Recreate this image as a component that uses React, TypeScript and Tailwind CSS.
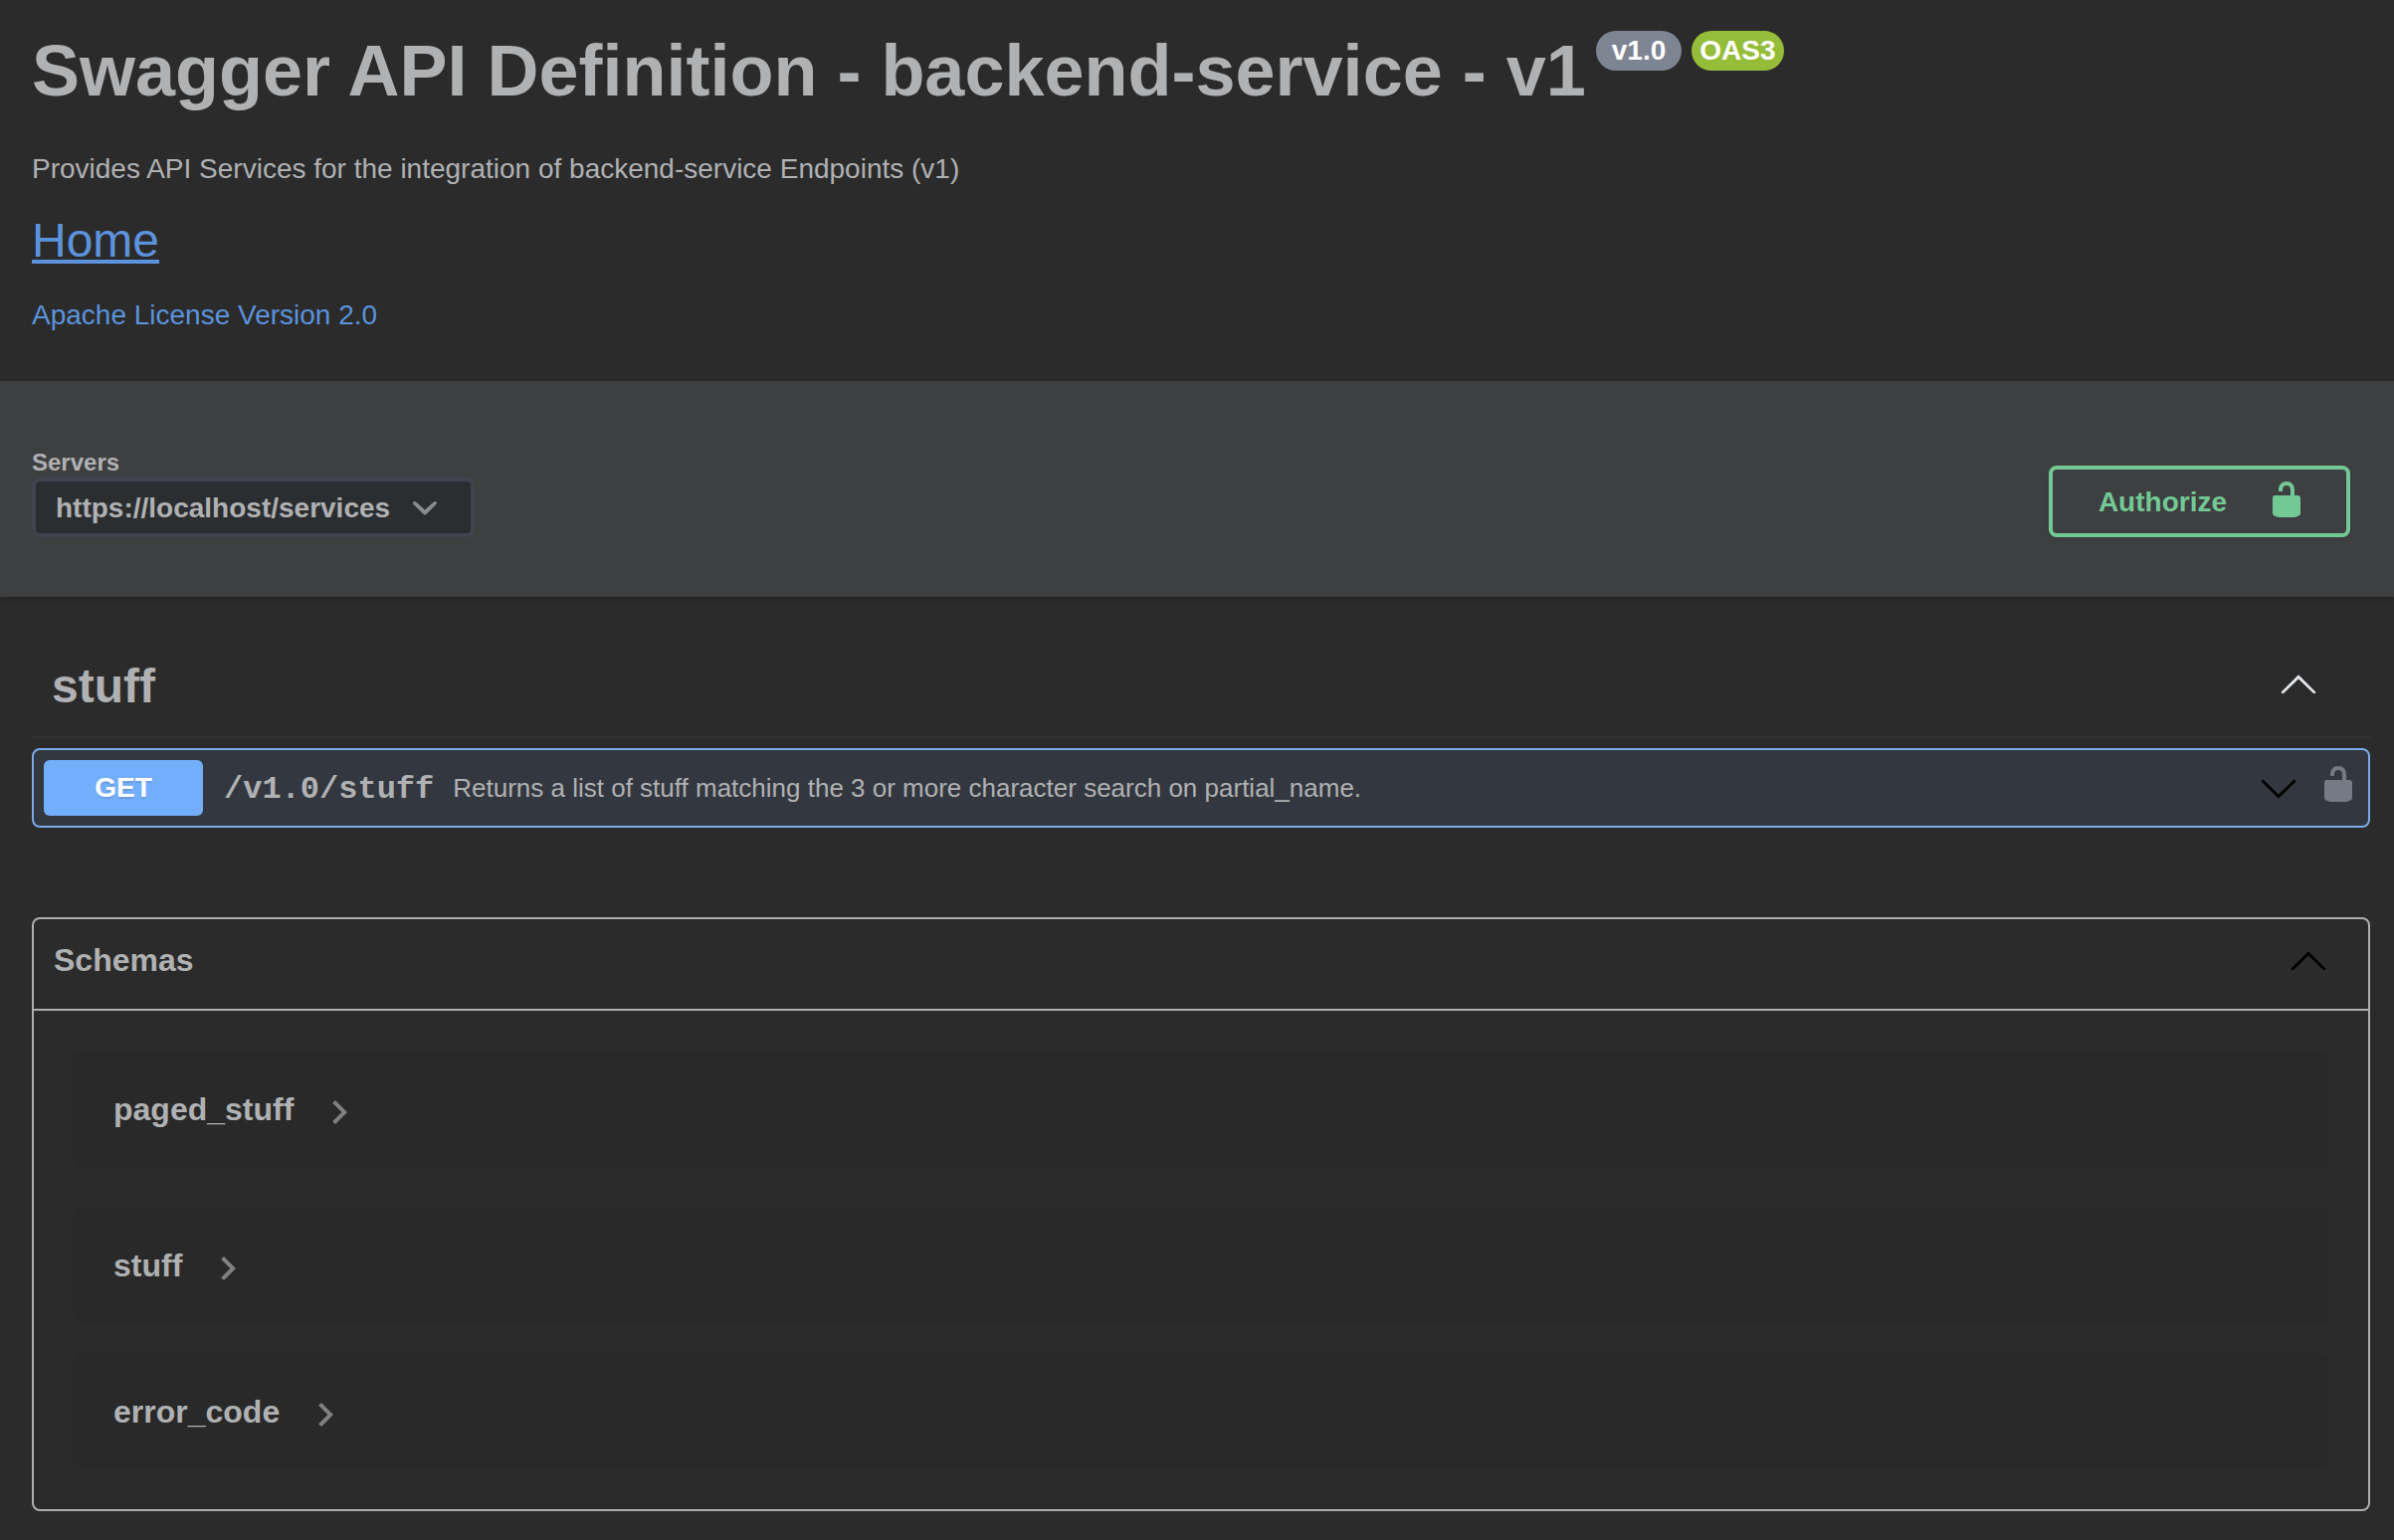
import React from "react";

const UNLOCKED =
  "M15.8 8H14V5.6C14 2.703 12.665 1 10 1 7.334 1 6 2.703 6 5.6V6h2v-.801C8 3.754 8.797 3 10 3c1.203 0 2 .754 2 2.199V8H4c-.553 0-1 .646-1 1.199V17c0 .549.428 1.139.951 1.307l1.197.387C5.672 18.861 6.55 19 7.1 19h5.8c.549 0 1.428-.139 1.951-.307l1.196-.387c.524-.167.953-.757.953-1.306V9.199C17 8.646 16.352 8 15.8 8z";
const ARROW_DOWN =
  "M17.418 6.109c.272-.268.709-.268.979 0s.271.701 0 .969l-7.908 7.83c-.27.268-.707.268-.979 0l-7.908-7.83c-.27-.268-.27-.701 0-.969.271-.268.709-.268.979 0L10 13.25l7.418-7.141z";
const ARROW_UP =
  "M17.418 14.908c.272.268.709.268.979 0s.271-.701 0-.969l-7.908-7.83c-.27-.268-.707-.268-.979 0l-7.908 7.83c-.27.268-.27.701 0 .969.271.268.709.268.979 0L10 7.767l7.418 7.141z";
const SELECT_ARROW =
  "M13.418 7.859c.271-.268.709-.268.978 0 .27.268.272.701 0 .969l-3.908 3.83c-.27.268-.707.268-.979 0l-3.908-3.83c-.27-.267-.27-.701 0-.969.271-.268.709-.268.978 0L10 11l3.418-3.141z";

function Icon({ d, className }: { d: string; className: string }) {
  return (
    <svg viewBox="0 0 20 20" className={className} fill="currentColor" aria-hidden="true">
      <path d={d} />
    </svg>
  );
}

function Header() {
  return (
    <header className="px-8 pt-6 pb-[50px]">
      <div className="flex items-start gap-[10px]">
        <h1 className="text-[72px] leading-[94px] font-bold">
          Swagger API Definition - backend-service - v1
        </h1>
        <div className="mt-[7px] flex gap-[10px] text-[28px] leading-10 font-bold text-white">
          <span className="rounded-full bg-[#7d8492] px-4">v1.0</span>
          <span className="rounded-full bg-[#95bd3a] px-2">OAS3</span>
        </div>
      </div>
      <p className="mt-9 text-[28px] leading-8">
        Provides API Services for the integration of backend-service Endpoints (v1)
      </p>
      <p className="mt-7 text-[48px] leading-14">
        <a href="#home" className="text-[#5c93dd] underline">
          Home
        </a>
      </p>
      <p className="mt-[31px] text-[28px] leading-8">
        <a href="#license" className="text-[#5c93dd]">
          Apache License Version 2.0
        </a>
      </p>
    </header>
  );
}

function ServerBar() {
  return (
    <section className="flex items-end justify-between bg-[#3e3f41] pt-[68px] pr-11 pb-[60px] pl-8 shadow-[0_2px_4px_rgba(0,0,0,0.15)]">
      <div className="flex flex-col gap-px">
        <label htmlFor="servers" className="text-[24px] leading-7 font-bold">
          Servers
        </label>
        <div className="relative">
          <select
            id="servers"
            className="h-[60px] appearance-none rounded-lg border-4 border-[#41444e] bg-[#2b2e31] pt-[2px] pr-20 pl-5 text-[28px] font-bold"
          >
            <option>https://localhost/services</option>
          </select>
          <Icon
            d={SELECT_ARROW}
            className="pointer-events-none absolute top-1 right-6 size-[52px] text-[#8b8b8b]"
          />
        </div>
      </div>
      <button className="flex h-18 items-center rounded-lg border-4 border-[#73c995] pt-[2px] pr-10 pl-[46px] text-[28px] font-bold text-[#73c995] shadow-[0_2px_4px_rgba(0,0,0,0.1)]">
        Authorize
        <Icon d={UNLOCKED} className="mb-[6px] ml-10 size-10" />
      </button>
    </section>
  );
}

function Operations() {
  return (
    <section className="pt-10">
      <div className="flex items-center justify-between border-b-2 border-[#323135] pt-[22px] pr-[52px] pb-[22px] pl-5">
        <h2 className="text-[48px] leading-14 font-bold">stuff</h2>
        <button aria-label="Collapse stuff" className="mb-[6px] text-[#e3e6ea]">
          <Icon d={ARROW_UP} className="size-10" />
        </button>
      </div>
      <div className="mt-[10px] flex items-center rounded-lg border-2 border-[#7aaae8] bg-[#333840] p-[10px]">
        <button className="h-14 w-40 rounded-md bg-[#73aefa] text-[28px] font-bold text-white [text-shadow:0_2px_0_rgba(0,0,0,0.1)]">
          GET
        </button>
        <code className="mt-1 ml-[21px] font-['Liberation_Mono',monospace] text-[32px] leading-10 font-bold">
          /v1.0/stuff
        </code>
        <span className="ml-[19px] grow text-[26px] leading-8">
          Returns a list of stuff matching the 3 or more character search on partial_name.
        </span>
        <button aria-label="Expand operation" className="text-black">
          <Icon d={ARROW_DOWN} className="size-10" />
        </button>
        <button aria-label="Authorization button unlocked" className="mb-2 ml-5 text-[#747b84]">
          <Icon d={UNLOCKED} className="size-10" />
        </button>
      </div>
    </section>
  );
}

function SchemaCard({ name }: { name: string }) {
  return (
    <div className="flex h-[117px] items-center rounded-lg bg-[#292929] pl-10">
      <button className="flex items-center text-[32px] leading-10 font-bold">
        {name}
        <svg
          viewBox="0 0 24 24"
          className="mt-[6px] ml-[22px] size-12 text-[#808080]"
          fill="currentColor"
          aria-hidden="true"
        >
          <path d="M10 6L8.59 7.41 13.17 12l-4.58 4.59L10 18l6-6z" />
        </svg>
      </button>
    </div>
  );
}

function Schemas() {
  return (
    <section className="mt-[90px] rounded-lg border-2 border-[#aeaeae]">
      <div className="flex items-center justify-between border-b-2 border-[#aeaeae] pt-[21px] pr-10 pb-[29px] pl-5">
        <h3 className="text-[32px] leading-10 font-bold">Schemas</h3>
        <button aria-label="Collapse schemas" className="text-black">
          <Icon d={ARROW_UP} className="size-10" />
        </button>
      </div>
      <div className="flex flex-col p-10">
        <div className="mb-10">
          <SchemaCard name="paged_stuff" />
        </div>
        <div className="flex flex-col gap-[30px]">
          <SchemaCard name="stuff" />
          <SchemaCard name="error_code" />
        </div>
      </div>
    </section>
  );
}

export default function App() {
  return (
    <div className="min-h-screen bg-[#2b2b2b] font-['Liberation_Sans',Arial,sans-serif] text-[#b0b1b3]">
      <Header />
      <ServerBar />
      <main className="pr-6 pb-7 pl-8">
        <Operations />
        <Schemas />
      </main>
    </div>
  );
}
